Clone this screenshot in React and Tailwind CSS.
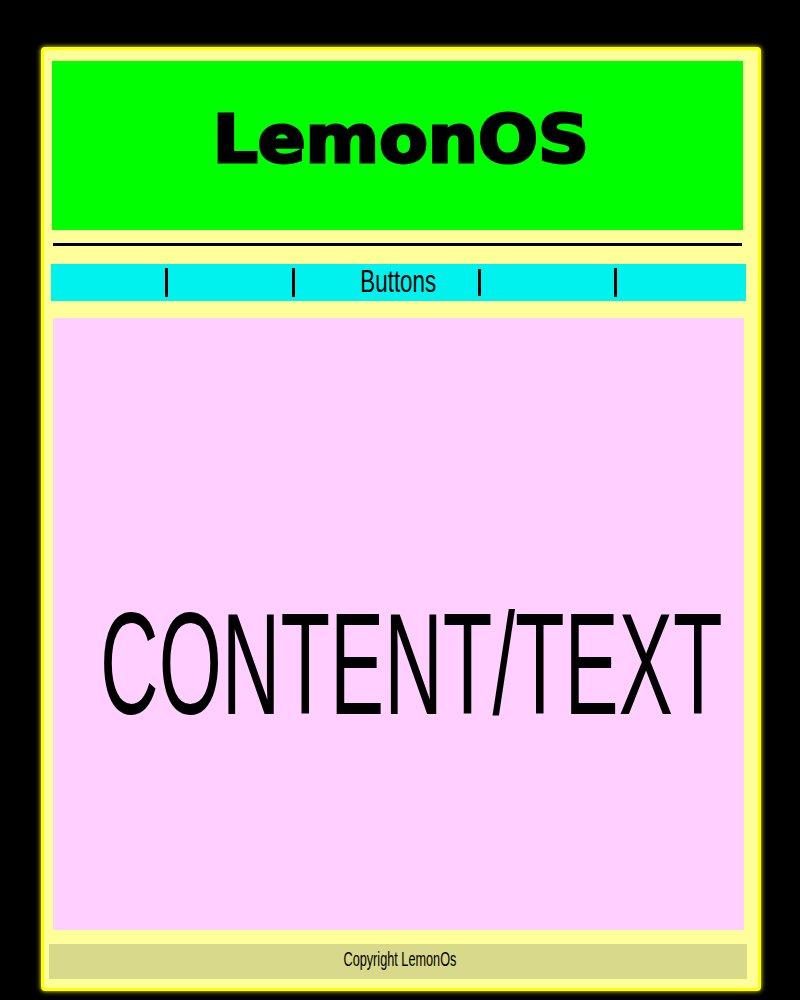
export default function App() {
  const narrow = { fontFamily: '"Liberation Sans", Arial, sans-serif' }

  return (
    <div className="min-h-[1000px] w-[800px] bg-black pt-[47px] pl-[41px]">
      <div className="w-[720px] h-[944px] rounded-[4px] border-[3px] border-[#ffff00] bg-[#ffff99] shadow-[0_0_5px_#ffff00] flex flex-col">
        {/* cabeçalho */}
        <div className="mt-[11px] ml-[8px] mr-[15px] h-[169px] bg-[#00ff00] flex justify-center pt-[46px]">
          <span
            className="inline-block whitespace-nowrap text-[66px] leading-none font-bold text-black ml-[6px] scale-x-[1.07] [-webkit-text-stroke:3px_black]"
            style={{ fontFamily: '"DejaVu Sans", Verdana, sans-serif' }}
          >
            LemonOS
          </span>
        </div>

        <div className="mt-[13px] ml-[9px] mr-[16px] h-[3px] bg-black" />

        {/* barra de botões */}
        <div className="mt-[18px] ml-[7px] mr-[12px] h-[37px] bg-[#00f2ee] flex items-start pl-[114px]">
          <div className="mt-[4px] w-[3px] h-[29px] bg-black" />
          <div className="ml-[124px] mt-[4px] w-[3px] h-[29px] bg-black" />
          <div className="ml-[65px] w-[76px] pt-[1px] flex justify-center">
            <span className="inline-block whitespace-nowrap text-[32px] leading-none text-black scale-x-[0.7]" style={narrow}>
              Buttons
            </span>
          </div>
          <div className="ml-[42px] mt-[5px] w-[3px] h-[27px] bg-black" />
          <div className="ml-[133px] mt-[4px] w-[3px] h-[29px] bg-black" />
        </div>

        {/* conteúdo */}
        <div className="mt-[17px] ml-[9px] mr-[14px] h-[612px] bg-[#ffd0ff] overflow-hidden flex items-start pl-[47px] pt-[274px]">
          <span className="inline-block whitespace-nowrap origin-left text-[145px] leading-none text-black scale-x-[0.56]" style={narrow}>
            CONTENT/TEXT
          </span>
        </div>

        {/* rodapé */}
        <div className="mt-[14px] ml-[5px] mr-[11px] h-[35px] bg-[#d9d98b] flex justify-center pt-[5px]">
          <span className="inline-block whitespace-nowrap text-[20px] leading-none text-black scale-x-[0.635] ml-[4px]" style={narrow}>
            Copyright LemonOs
          </span>
        </div>
      </div>
    </div>
  )
}
